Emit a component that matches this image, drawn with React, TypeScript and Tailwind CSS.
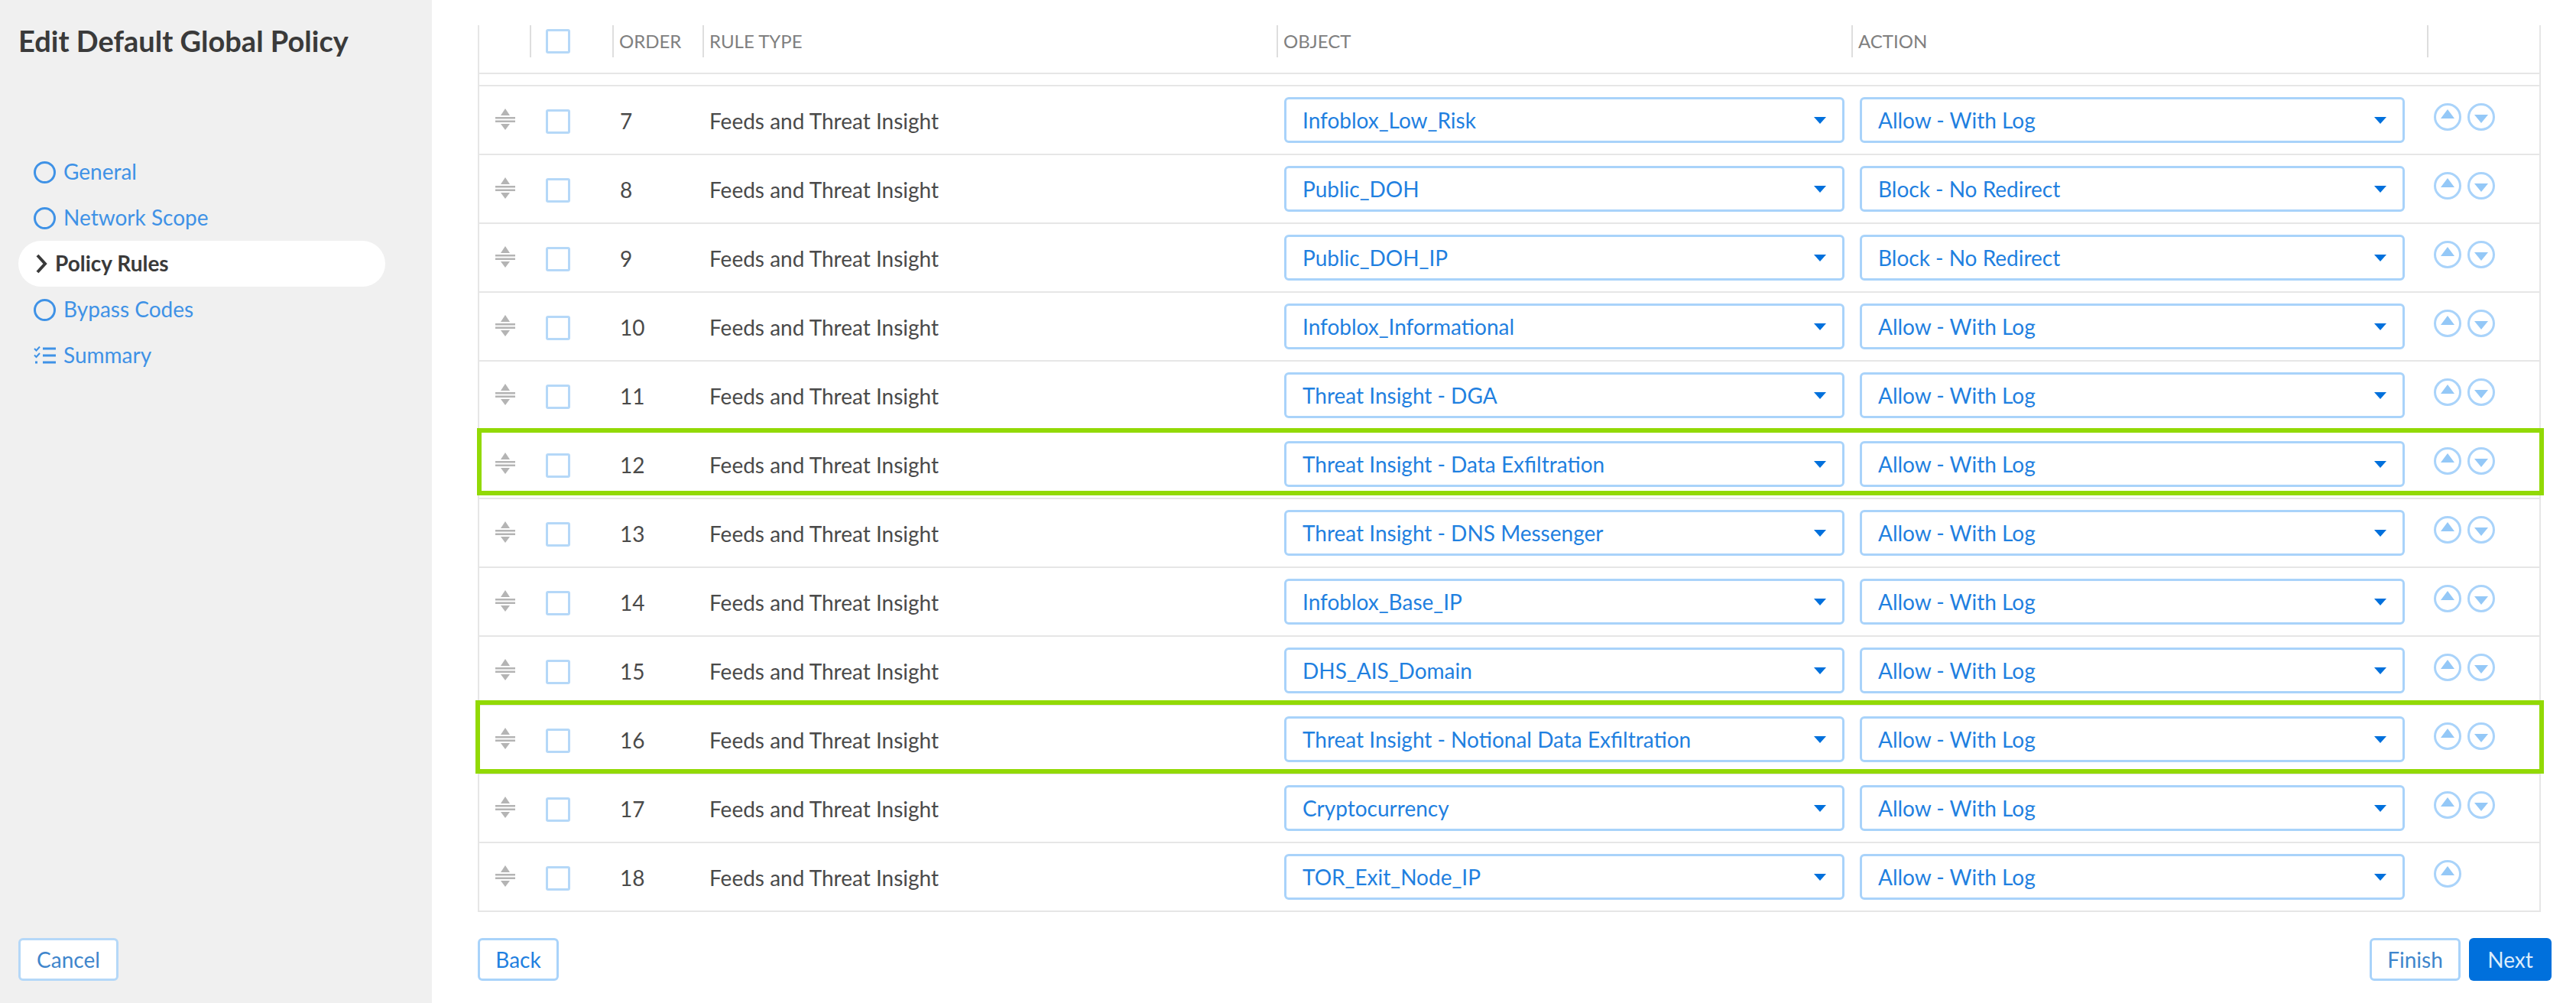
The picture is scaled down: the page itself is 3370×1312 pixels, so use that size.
import React from 'react';

const font = "font-['Lato','Noto_Sans',sans-serif]";

const rules = [
  { order: 7, object: 'Infoblox_Low_Risk', action: 'Allow - With Log' },
  { order: 8, object: 'Public_DOH', action: 'Block - No Redirect' },
  { order: 9, object: 'Public_DOH_IP', action: 'Block - No Redirect' },
  { order: 10, object: 'Infoblox_Informational', action: 'Allow - With Log' },
  { order: 11, object: 'Threat Insight - DGA', action: 'Allow - With Log' },
  {
    order: 12,
    object: 'Threat Insight - Data Exfiltration',
    action: 'Allow - With Log',
    box: '-left-[3px] -right-[6px] -top-[3px] h-[88px]',
  },
  { order: 13, object: 'Threat Insight - DNS Messenger', action: 'Allow - With Log' },
  { order: 14, object: 'Infoblox_Base_IP', action: 'Allow - With Log' },
  { order: 15, object: 'DHS_AIS_Domain', action: 'Allow - With Log' },
  {
    order: 16,
    object: 'Threat Insight - Notional Data Exfiltration',
    action: 'Allow - With Log',
    box: '-left-[5px] -right-[6px] -top-[7px] h-[96px]',
  },
  { order: 17, object: 'Cryptocurrency', action: 'Allow - With Log' },
  { order: 18, object: 'TOR_Exit_Node_IP', action: 'Allow - With Log', last: true },
];

const cols = 'grid grid-cols-[66px_108px_118px_751px_752px_753px_1fr]';

function Ring() {
  return <span className="w-[29px] h-[29px] rounded-full border-[3px] border-[#3f92e6] shrink-0" />;
}

function SummaryIcon() {
  return (
    <svg width="29" height="24" viewBox="0 0 29 24" fill="none" stroke="#3f92e6" strokeWidth="3" className="shrink-0">
      <path d="M12 3h17M12 12h17M12 21h17" />
      <path d="M1 3l2.5 2.5L8 0.5M1 11.5l2.5 2.5L8 9" strokeWidth="2" />
      <path d="M2 21h3" strokeWidth="3" />
    </svg>
  );
}

function NavItem({ label, icon }: { label: string; icon: React.ReactNode }) {
  return (
    <div className="h-[60px] pl-5 flex items-center gap-[10px] text-[#3f92e6] text-[28px]">
      {icon}
      <span className="-mt-[2px]">{label}</span>
    </div>
  );
}

function Handle() {
  return (
    <svg width="26" height="28" viewBox="0 0 26 28" fill="#b4b4b4" className="ml-[21px] -mt-[2px]">
      <path d="M13 0l6 9H7z" />
      <path d="M0 11h26v2.5H0zM0 15.5h26V18H0z" />
      <path d="M13 28l-6-8h12z" />
    </svg>
  );
}

function Checkbox() {
  return <span className="block w-[32px] h-[32px] rounded-[3px] border-[3px] border-[#b5d8f8] bg-white" />;
}

function Select({ value, wide }: { value: string; wide?: boolean }) {
  return (
    <div
      className={`h-[60px] border-[3px] border-[#a9d3fa] rounded-[6px] flex items-center justify-between pl-[21px] pr-[21px] text-[#1f80e0] text-[28px] ${
        wide ? 'ml-[10px] w-[733px]' : 'ml-[11px] w-[713px]'
      }`}
    >
      <span>{value}</span>
      <span className="w-0 h-0 border-x-[8px] border-x-transparent border-t-[9px] border-t-[#0070dc]" />
    </div>
  );
}

function MoveButton({ down }: { down?: boolean }) {
  return (
    <svg width="36" height="36" viewBox="0 0 36 36" fill="none">
      <circle cx="18" cy="18" r="16.5" stroke="#a9d3fa" strokeWidth="3" />
      <path d={down ? 'M9 15h18l-9 11z' : 'M18 8l9 12H9z'} fill="#94c8f7" />
    </svg>
  );
}

function HeaderCell({ label }: { label?: string }) {
  return (
    <div className="h-[42px] flex items-center pl-[7px] text-[24px] text-[#808080] border-l-2 border-[#dedede]">
      {label}
    </div>
  );
}

function Row({ rule }: { rule: (typeof rules)[number] }) {
  return (
    <div className={`${cols} relative h-[90px] items-center border-b-2 border-[#e6e6e6] text-[#4a4a4a] text-[28px]`}>
      <Handle />
      <div className="pl-[21px] mt-[4px]">
        <Checkbox />
      </div>
      <div className="pl-[10px] pt-[2px]">{rule.order}</div>
      <div className="pl-[9px] pt-[2px]">Feeds and Threat Insight</div>
      <Select value={rule.object} wide />
      <Select value={rule.action} />
      <div className="pl-[9px] -mt-[8px] flex gap-[8px]">
        <MoveButton />
        {!rule.last && <MoveButton down />}
      </div>
      {rule.box && <div className={`absolute ${rule.box} border-[6px] border-[#92d905] pointer-events-none`} />}
    </div>
  );
}

export default function App() {
  return (
    <div className={`${font} flex w-[3370px] h-[1312px] bg-white overflow-hidden`}>
      {/* Wizard steps */}
      <aside className="w-[565px] shrink-0 bg-[#f0f0f0] flex flex-col pl-[24px] pt-[29px] pb-[29px]">
        <h1 className="text-[38px] leading-[48px] font-bold text-[#3a3a3a]">Edit Default Global Policy</h1>
        <nav className="mt-[118px] w-[480px]">
          <NavItem label="General" icon={<Ring />} />
          <NavItem label="Network Scope" icon={<Ring />} />
          <div className="h-[60px] pl-[23px] flex items-center gap-[10px] bg-white rounded-full text-[28px] font-bold text-[#3a3a3a]">
            <svg width="15" height="26" viewBox="0 0 15 26" fill="none" stroke="#3a3a3a" strokeWidth="4" className="shrink-0">
              <path d="M2 2l10 11L2 24" />
            </svg>
            <span className="-mt-[2px]">Policy Rules</span>
          </div>
          <NavItem label="Bypass Codes" icon={<Ring />} />
          <NavItem label="Summary" icon={<SummaryIcon />} />
        </nav>
        <button className="mt-auto w-[131px] h-[56px] bg-white border-[3px] border-[#b5d8f8] rounded-[6px] text-[#3f86cc] text-[28px]">
          Cancel
        </button>
      </aside>

      {/* Rules table */}
      <main className="flex-1 flex flex-col pl-[60px] pt-[33px] pr-[32px] pb-[29px]">
        <div className="w-[2699px] border-x-2 border-[#e6e6e6]">
          <div className={`${cols} h-[64px] border-b-2 border-[#e6e6e6]`}>
            <div />
            <div className="h-[42px] border-l-2 border-[#dedede] flex items-center pl-[19px]">
              <Checkbox />
            </div>
            <HeaderCell label="ORDER" />
            <HeaderCell label="RULE TYPE" />
            <HeaderCell label="OBJECT" />
            <HeaderCell label="ACTION" />
            <HeaderCell />
          </div>
          <div className="h-[16px] border-b-2 border-[#e6e6e6]" />
          {rules.map(rule => (
            <Row key={rule.order} rule={rule} />
          ))}
        </div>
        <div className="mt-auto flex items-center gap-[11px]">
          <button className="w-[106px] h-[56px] bg-white border-[3px] border-[#a9d3fa] rounded-[6px] text-[#1f80e0] text-[28px]">
            Back
          </button>
          <button className="ml-auto w-[119px] h-[56px] bg-white border-[3px] border-[#a9d3fa] rounded-[6px] text-[#3f86cc] text-[28px]">
            Finish
          </button>
          <button className="w-[108px] h-[56px] bg-[#0070dc] rounded-[6px] text-[#dcecfb] text-[28px]">Next</button>
        </div>
      </main>
    </div>
  );
}
